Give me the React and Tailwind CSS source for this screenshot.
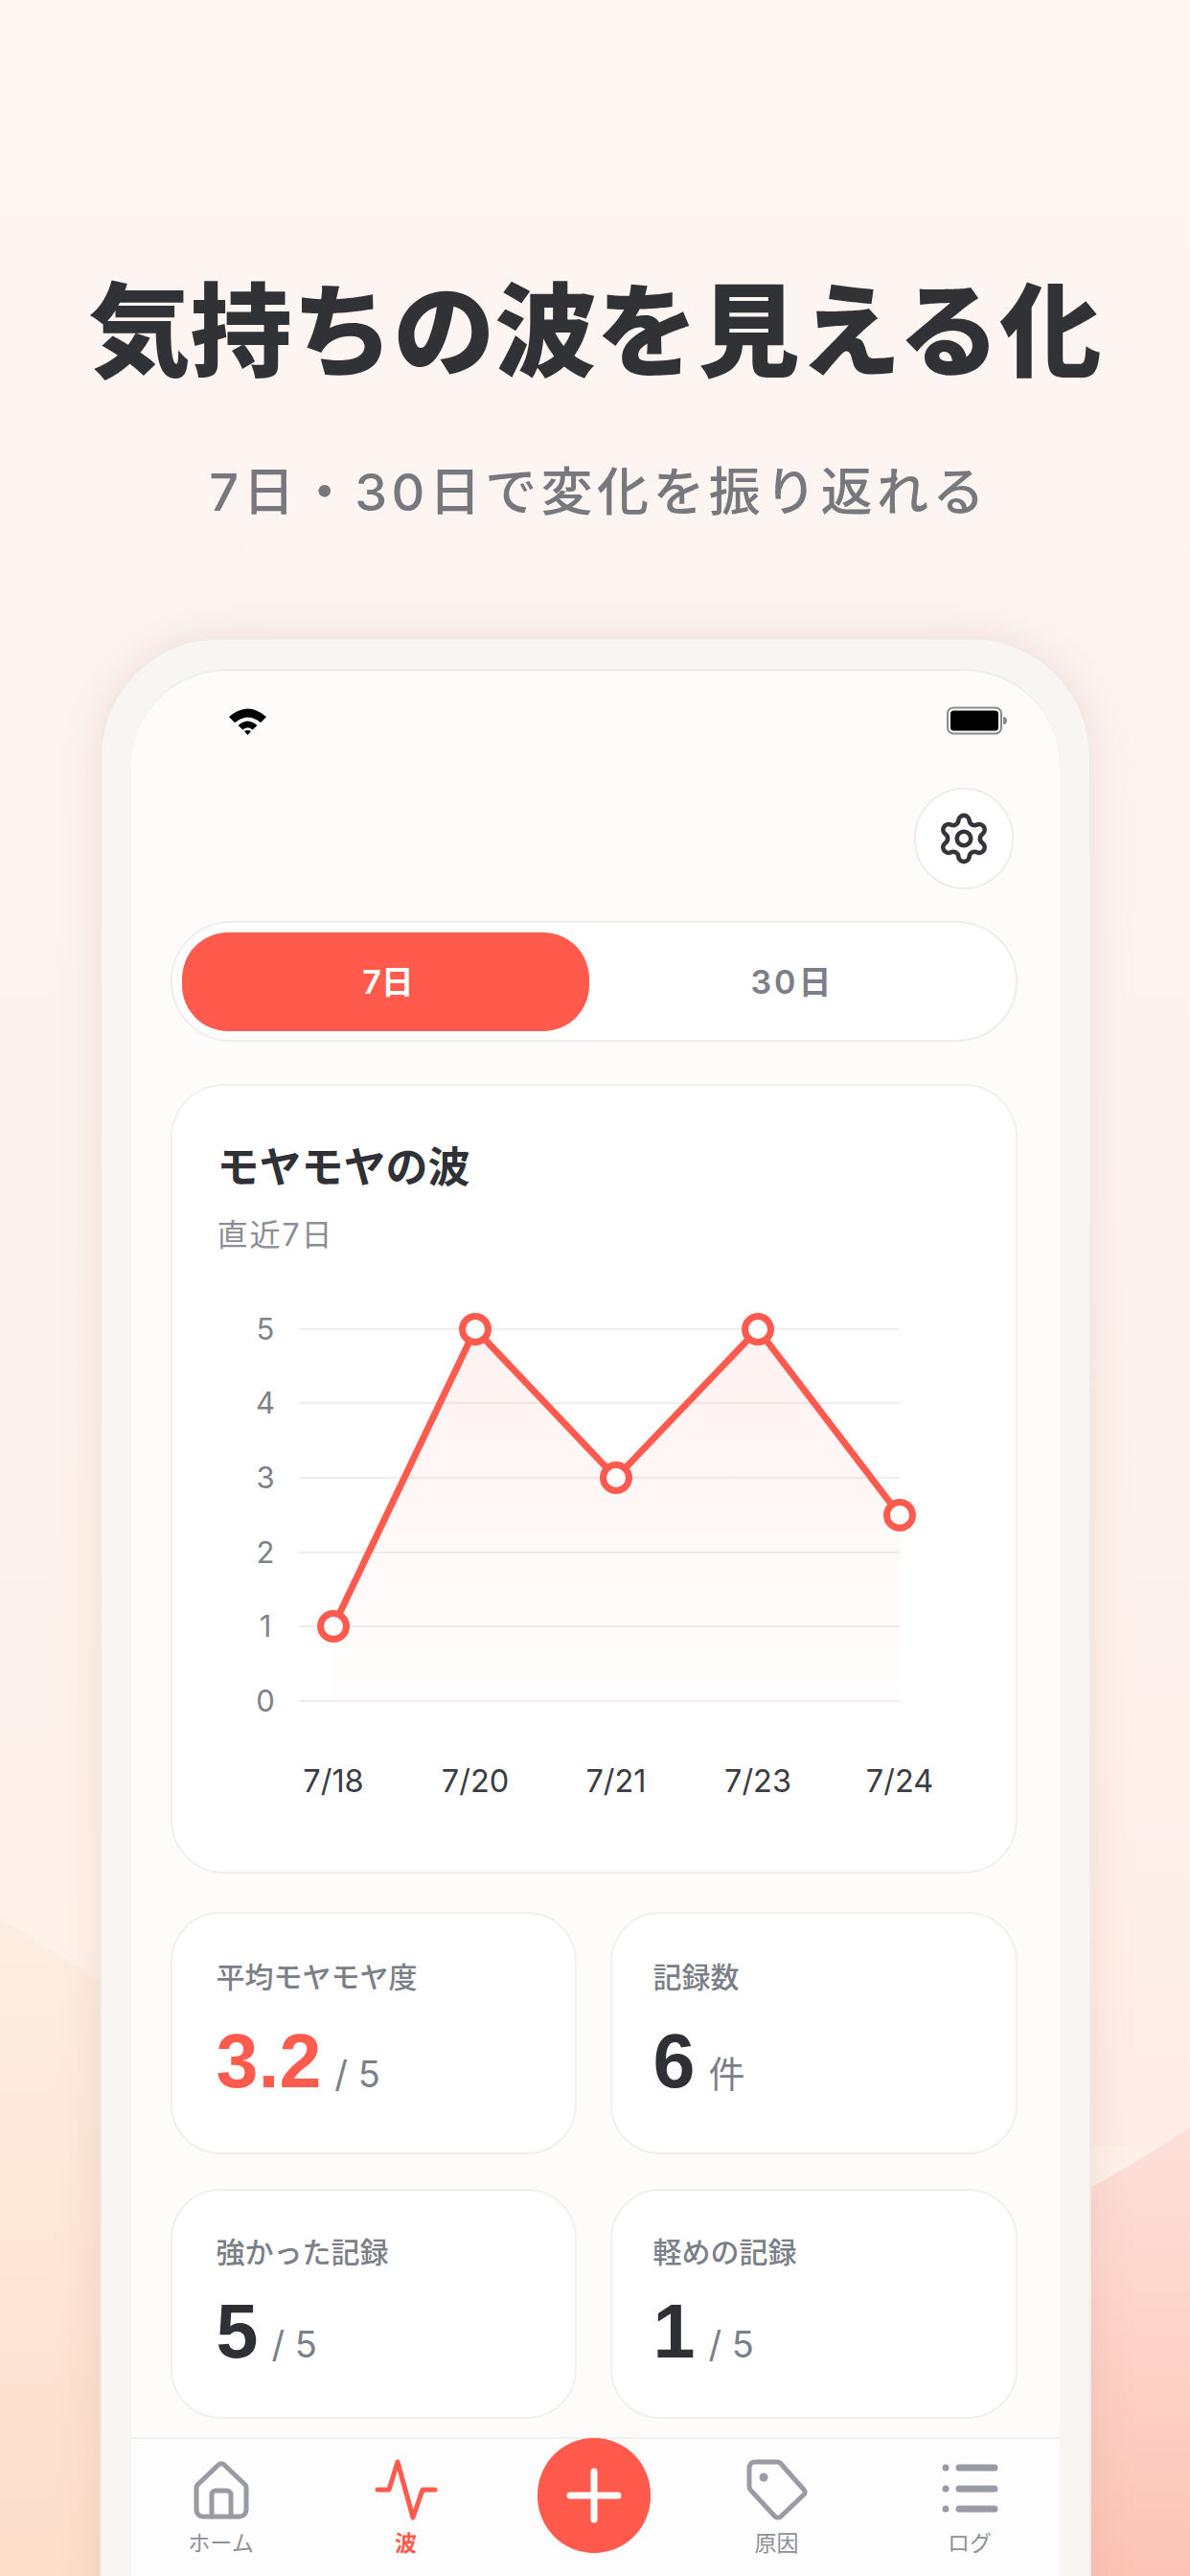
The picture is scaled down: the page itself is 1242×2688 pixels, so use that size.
import React from "react";
import { Settings } from "lucide-react";

const jp = 'font-["Inter","Noto_Sans_CJK_JP",sans-serif]';
const xs = [168, 316, 463, 611, 759];
const ys = [358, 48, 203, 48, 242];
const gy = [48, 125, 203, 281, 358, 436];
const pts = xs.map((x, i) => `${x},${ys[i]}`).join(" ");

function Chart() {
  return (
    <svg width="884" height="560" viewBox="0 0 884 560" className="mt-[30px] block">
      <defs>
        <linearGradient id="area" x1="0" y1="0" x2="0" y2="1">
          <stop offset="0" stopColor="#ff5a4e" stopOpacity="0.08" />
          <stop offset="1" stopColor="#ff5a4e" stopOpacity="0.01" />
        </linearGradient>
      </defs>
      {gy.map((y) => (
        <line key={y} x1="132" x2="759" y1={y} y2={y} stroke="#f1edeb" strokeWidth="2" />
      ))}
      <polygon points={`168,436 ${pts} 759,436`} fill="url(#area)" />
      <polyline points={pts} fill="none" stroke="#ff5a4e" strokeWidth="7" strokeLinejoin="round" />
      {xs.map((x, i) => (
        <circle key={x} cx={x} cy={ys[i]} r="13.5" fill="#fff" stroke="#ff5a4e" strokeWidth="7" />
      ))}
      {["5", "4", "3", "2", "1", "0"].map((t, i) => (
        <text key={t} x="97" y={gy[i] + 11} textAnchor="middle" fontSize="31" fill="#7e828b" fontFamily="Inter, sans-serif">
          {t}
        </text>
      ))}
      {["7/18", "7/20", "7/21", "7/23", "7/24"].map((t, i) => (
        <text key={t} x={xs[i]} y="531" textAnchor="middle" fontSize="32.5" fill="#3b3d43" fontFamily="Inter, sans-serif">
          {t}
        </text>
      ))}
    </svg>
  );
}

function Stat({ label, value, unit, red, h, top, gapTop, left }) {
  return (
    <div className={`${h} rounded-[52px] border-2 border-[#f3efec] bg-white ${left} ${top}`}>
      <div className={`text-[30px] font-medium leading-[40px] text-[#7b7f88] ${jp}`}>{label}</div>
      <div className={`${gapTop} flex items-baseline`}>
        <span className={`font-["Liberation_Sans",sans-serif] text-[79px] font-bold leading-[70px] ${red ? "text-[#ff5a4e]" : "text-[#2e3036]"}`}>
          {value}
        </span>
        <span className={`ml-[14px] text-[38px] leading-[40px] text-[#7b7f88] ${jp}`}>{unit}</span>
      </div>
    </div>
  );
}

function NavItem({ w, extra, label, active, children }) {
  return (
    <div className={`${w} ${extra} flex flex-col items-center`}>
      <div className="flex h-[64px] items-center justify-center">{children}</div>
      <div className={`mt-[9px] text-[23px] leading-[30px] ${jp} ${active ? "font-semibold text-[#ff5a4e]" : "text-[#8f9199]"}`}>
        {label}
      </div>
    </div>
  );
}

export default function App() {
  return (
    <div className="relative h-[2688px] w-[1242px] overflow-hidden bg-[linear-gradient(180deg,#fdf6f3_0%,#fdf3ee_45%,#fef2ea_75%,#feefe8_100%)]">
      <svg className="absolute inset-0" width="1242" height="2688" viewBox="0 0 1242 2688">
        <defs>
          <linearGradient id="wl" x1="0" y1="0" x2="0" y2="1">
            <stop offset="0" stopColor="#fdeee3" />
            <stop offset="1" stopColor="#fddecb" />
          </linearGradient>
          <linearGradient id="wr" x1="0" y1="0" x2="0" y2="1">
            <stop offset="0" stopColor="#fee0d9" />
            <stop offset="1" stopColor="#fcc4b6" />
          </linearGradient>
          <linearGradient id="wt" x1="0" y1="0" x2="0" y2="1">
            <stop offset="0" stopColor="#feeee8" stopOpacity="0" />
            <stop offset="1" stopColor="#feece6" />
          </linearGradient>
        </defs>
        <path d="M1100 1700 H1242 V2240 H1100 Z" fill="url(#wt)" />
        <path d="M0 2001 L200 2128 V2688 H0 Z" fill="url(#wl)" />
        <path d="M1242 2220 Q1190 2255 1100 2304 V2688 H1242 Z" fill="url(#wr)" />
      </svg>

      <div className="relative flex flex-col items-center">
        <h1 className={`pt-[286px] text-[106px] font-black leading-[120px] text-[#303236] ${jp}`}>気持ちの波を見える化</h1>
        <p className={`mt-[73px] pl-[8px] text-[54px] font-medium leading-[70px] tracking-[4.4px] text-[#76787e] ${jp}`}>7日・30日で変化を振り返れる</p>

        <div className="mt-[116px] h-[2100px] w-[1035px] rounded-t-[125px] border-2 border-[#efeae6] bg-[#f8f5f2] px-[31px] pt-[31px] shadow-[0_0_44px_rgba(190,130,110,0.2)]">
          <div className="h-full w-[969px] rounded-t-[100px] border-t-2 border-[#f1ece8] bg-[#fdfcfb]">
            <div className="mt-[37px] flex h-[30px] items-center justify-between pl-[101px] pr-[54px]">
              <svg width="41" height="30" viewBox="0 0 41 30">
                <path d="M1 11 Q20.5 -6 40 11 L34 17 Q20.5 6 7 17 Z" fill="#000" />
                <path d="M10.5 20 Q20.5 11 30.5 20 L25.5 24.5 Q20.5 20 15.5 24.5 Z" fill="#000" />
                <path d="M17 26 Q20.5 24 24 26 L20.5 30 Z" fill="#000" />
              </svg>
              <svg width="64" height="30" viewBox="0 0 64 30">
                <rect x="1" y="1.5" width="56" height="27" rx="6" fill="none" stroke="#8a8a8a" strokeWidth="2" />
                <rect x="4" y="4.5" width="50" height="21" rx="3.5" fill="#000" />
                <path d="M59 11 a4 4 0 0 1 0 8 Z" fill="#8a8a8a" />
              </svg>
            </div>

            <div className="mt-[55px] flex justify-end pr-[48px]">
              <div className="flex h-[106px] w-[104px] items-center justify-center rounded-full border-2 border-[#f1ece9] bg-white">
                <Settings size={58} strokeWidth={1.9} color="#33353b" />
              </div>
            </div>

            <div className="ml-[41px] mt-[33px] flex h-[126px] w-[884px] items-center rounded-full border-2 border-[#f1ece9] bg-white pl-[10px]">
              <div className={`flex h-[103px] w-[425px] items-center justify-center rounded-[48px] bg-[#ff5a4c] pl-[6px] text-[34px] font-semibold text-white ${jp}`}>7日</div>
              <div className={`flex-1 pr-[20px] text-center text-[34px] font-semibold tracking-[3px] text-[#7b7f8a] ${jp}`}>30日</div>
            </div>

            <div className="ml-[41px] mt-[44px] h-[824px] w-[884px] rounded-[56px] border-2 border-[#f3efec] bg-white pt-[57px]">
              <div className={`pl-[47px] text-[44px] font-bold leading-[56px] text-[#2f3136] ${jp}`}>モヤモヤの波</div>
              <div className={`mt-[23px] pl-[47px] text-[32px] leading-[40px] tracking-[2px] text-[#8b8e95] ${jp}`}>直近7日</div>
              <Chart />
            </div>

            <div className="ml-[41px] mt-[40px] grid w-[884px] grid-cols-[424px_425px] gap-x-[35px] gap-y-[36px]">
              <Stat label="平均モヤモヤ度" value="3.2" unit="/ 5" red h="h-[253px]" top="pt-[46px]" gapTop="mt-[33px]" left="pl-[46px]" />
              <Stat label="記録数" value="6" unit="件" h="h-[253px]" top="pt-[46px]" gapTop="mt-[33px]" left="pl-[43px]" />
              <Stat label="強かった記録" value="5" unit="/ 5" h="h-[240px]" top="pt-[44px]" gapTop="mt-[28px]" left="pl-[46px]" />
              <Stat label="軽めの記録" value="1" unit="/ 5" h="h-[240px]" top="pt-[44px]" gapTop="mt-[28px]" left="pl-[43px]" />
            </div>

            <div className="mt-[19px] flex h-[145px] border-t-2 border-[#f3f0ed] bg-[#fefdfd] pt-[21px]">
              <NavItem w="w-[188px]" label="ホーム">
                <svg width="58" height="62" viewBox="0 0 58 62" fill="none" stroke="#999ba4" strokeWidth="5" strokeLinejoin="round" strokeLinecap="round">
                  <path d="M26 5 a4 4 0 0 1 6 0 L53 25 a5 5 0 0 1 2 4 V52 a7 7 0 0 1 -7 7 H10 a7 7 0 0 1 -7 -7 V29 a5 5 0 0 1 2 -4 Z" />
                  <path d="M19 59 V36 a4 4 0 0 1 4 -4 H35 a4 4 0 0 1 4 4 V59" />
                </svg>
              </NavItem>
              <NavItem w="w-[198px]" label="波" active>
                <svg width="66" height="64" viewBox="0 0 66 64" fill="none" stroke="#ff5a4e" strokeWidth="5" strokeLinejoin="round" strokeLinecap="round">
                  <path d="M3 32 H15 L24 3 L40 61 L50 32 H63" />
                </svg>
              </NavItem>
              <div className="relative w-[194px]">
                <div className="absolute left-[38px] top-[-22px] flex h-[120px] w-[118px] items-center justify-center rounded-full bg-[#ff5a4c]">
                  <svg width="58" height="58" viewBox="0 0 58 58" stroke="#fff" strokeWidth="7" strokeLinecap="round">
                    <path d="M29 4 V54 M4 29 H54" />
                  </svg>
                </div>
              </div>
              <NavItem w="w-[188px]" label="原因">
                <svg width="64" height="64" viewBox="0 0 64 64" fill="none" stroke="#999ba4" strokeWidth="5" strokeLinejoin="round">
                  <path d="M9 3 H32 a6 6 0 0 1 5 3 L60 32 a4 4 0 0 1 0 5 L37 59 a5 5 0 0 1 -8 0 L5 33 a6 6 0 0 1 -2 -5 V9 a6 6 0 0 1 6 -6 Z" />
                  <circle cx="18" cy="19" r="4.5" fill="#999ba4" stroke="none" />
                </svg>
              </NavItem>
              <NavItem w="w-[201px]" extra="pl-[14px]" label="ログ">
                <svg width="60" height="64" viewBox="0 0 60 64" stroke="#999ba4" strokeWidth="7" strokeLinecap="round">
                  <path d="M19 9 H56 M19 31 H56 M19 52 H56" />
                  <circle cx="5" cy="9" r="3.5" fill="#999ba4" stroke="none" />
                  <circle cx="5" cy="31" r="3.5" fill="#999ba4" stroke="none" />
                  <circle cx="5" cy="52" r="3.5" fill="#999ba4" stroke="none" />
                </svg>
              </NavItem>
            </div>
          </div>
        </div>
      </div>
    </div>
  );
}
